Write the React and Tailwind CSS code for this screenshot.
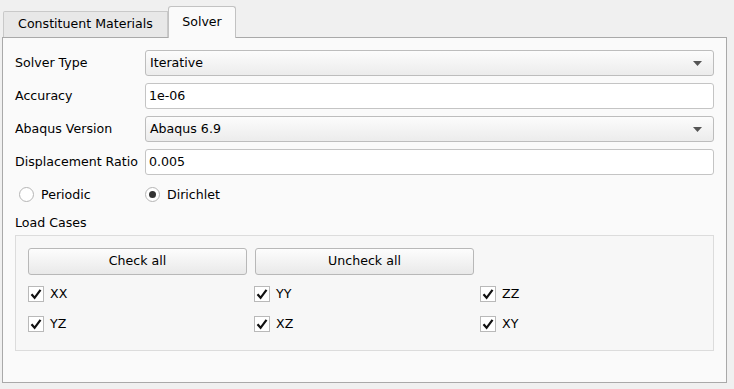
import React, { useState } from "react";

const font = { fontFamily: "Tahoma, 'DejaVu Sans', 'Liberation Sans', sans-serif" };

const Arrow = () => (
  <svg width="9" height="5" viewBox="0 0 9 5" className="shrink-0">
    <path d="M0 0 H9 L4.5 5 Z" fill="#555" />
  </svg>
);

const Combo = ({ value }) => (
  <div className="flex-1 h-[26px] flex items-center justify-between pl-[4px] pr-[11px] rounded-[3px] border border-[#bdbdbd] bg-gradient-to-b from-[#fcfcfc] to-[#ececec]">
    <span>{value}</span>
    <Arrow />
  </div>
);

const Field = ({ value }) => (
  <div className="flex-1 h-[26px] flex items-center pl-[3px] rounded-[3px] border border-[#c4c4c4] bg-white">
    {value}
  </div>
);

const Row = ({ label, children }) => (
  <div className="flex items-center h-[26px]">
    <div className="w-[130px] shrink-0 whitespace-nowrap">{label}</div>
    {children}
  </div>
);

const Radio = ({ checked, label }) => (
  <div className="flex items-center gap-[7px]">
    <div className="w-[15px] h-[15px] rounded-full border border-[#b5b5b5] bg-white flex items-center justify-center">
      {checked && <div className="w-[7px] h-[7px] rounded-full bg-[#333]" />}
    </div>
    <span>{label}</span>
  </div>
);

const Check = ({ label, checked, onToggle }) => (
  <div className="flex items-center h-[16px] gap-[6px] cursor-pointer" onClick={onToggle}>
    <div className="w-[16px] h-[16px] border border-[#b9b9b9] bg-white flex items-center justify-center">
      {checked && (
        <svg width="12" height="12" viewBox="0 0 12 12">
          <path d="M1.5 6.2 L4.6 9.8 L10.5 1.8" fill="none" stroke="#111" strokeWidth="2.2" />
        </svg>
      )}
    </div>
    <span>{label}</span>
  </div>
);

const Button = ({ children, onClick }) => (
  <button
    onClick={onClick}
    className="w-[219px] h-[27px] flex items-center justify-center rounded-[3px] border border-[#b8b8b8] bg-gradient-to-b from-[#fdfdfd] to-[#e9e9e9]"
  >
    {children}
  </button>
);

export default function App() {
  const cases = ["XX", "YY", "ZZ", "YZ", "XZ", "XY"];
  const [checked, setChecked] = useState(Object.fromEntries(cases.map((c) => [c, true])));

  const setAll = (v) => setChecked(Object.fromEntries(cases.map((c) => [c, v])));

  return (
    <div className="w-[734px] h-[389px] bg-[#f0f0f0] text-[12.6px] text-black overflow-hidden" style={font}>
      {/* Tabs */}
      <div className="flex items-end h-[37px] pl-[3px]">
        <div className="h-[26px] w-[165px] flex items-center justify-center border border-b-0 border-[#c9c9c9] bg-[#e8e8e8] rounded-tl-[2px]">
          Constituent Materials
        </div>
        <div className="h-[32px] w-[68px] -mb-px z-10 flex items-center justify-center border border-b-0 border-[#c2c2c2] bg-[#fafafa] rounded-t-[3px]">
          Solver
        </div>
      </div>

      {/* Panel */}
      <div className="ml-[2px] w-[725px] h-[346px] border border-[#a9a9a9] bg-[#fafafa] px-[12px] pt-[12px]">
        <div className="flex flex-col gap-[7px]">
          <Row label="Solver Type"><Combo value="Iterative" /></Row>
          <Row label="Accuracy"><Field value="1e-06" /></Row>
          <Row label="Abaqus Version"><Combo value="Abaqus 6.9" /></Row>
          <Row label="Displacement Ratio"><Field value="0.005" /></Row>
        </div>

        <div className="flex items-center h-[20px] mt-[10px] pl-[4px]">
          <div className="w-[126px]"><Radio label="Periodic" /></div>
          <Radio checked label="Dirichlet" />
        </div>

        <div className="mt-[9px] h-[18px] flex items-center">Load Cases</div>

        <div className="mt-[3px] h-[116px] border border-[#dcdcdc] bg-[#f7f7f7] px-[12px] pt-[12px]">
          <div className="flex gap-[8px]">
            <Button onClick={() => setAll(true)}>Check all</Button>
            <Button onClick={() => setAll(false)}>Uncheck all</Button>
          </div>
          <div className="grid grid-cols-[226px_226px_1fr] gap-y-[14px] mt-[11px]">
            {cases.map((c) => (
              <Check
                key={c}
                label={c}
                checked={checked[c]}
                onToggle={() => setChecked({ ...checked, [c]: !checked[c] })}
              />
            ))}
          </div>
        </div>
      </div>
    </div>
  );
}
